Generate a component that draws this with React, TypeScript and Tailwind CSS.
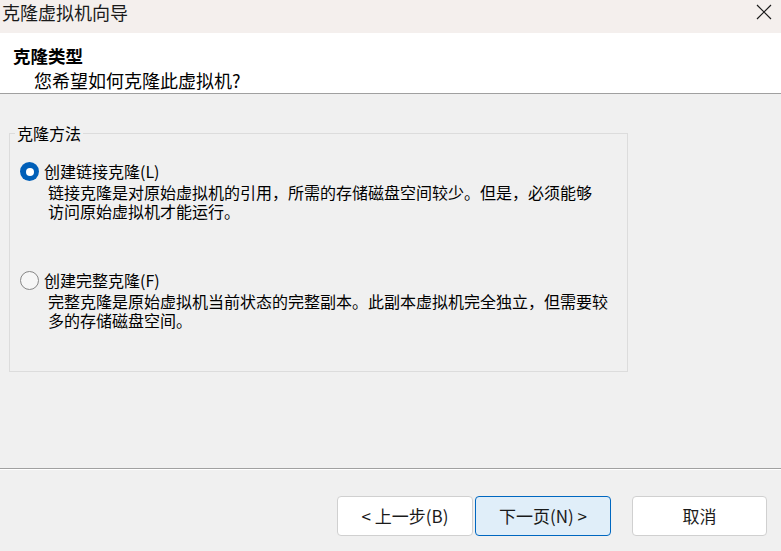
import React from 'react';

const Radio: React.FC<{ checked?: boolean }> = ({ checked }) =>
  checked ? (
    <span className="flex h-[19px] w-[19px] shrink-0 items-center justify-center rounded-full bg-[#005fb8]">
      <span className="h-[8px] w-[8px] rounded-full bg-white" />
    </span>
  ) : (
    <span className="h-[19px] w-[19px] shrink-0 rounded-full border-[1.5px] border-[#868686] bg-[#f6f6f6]" />
  );

const App: React.FC = () => {
  return (
    <div className="flex h-[551px] w-[781px] flex-col overflow-hidden bg-[#f0f0f0] font-['Noto_Sans_CJK_SC','Noto_Sans',sans-serif] text-black">
      {/* Title bar */}
      <div className="flex h-[33px] shrink-0 items-start justify-between bg-[#f4efed]">
        <span className="pl-[2px] pt-[1px] text-[18px] leading-[22px] text-[#1a1a1a]">克隆虚拟机向导</span>
        <svg className="mr-[9px] mt-[4px]" width="16" height="16" viewBox="0 0 16 16">
          <path d="M1 1 L15 15 M15 1 L1 15" stroke="#1a1a1a" strokeWidth="1.2" fill="none" />
        </svg>
      </div>

      {/* Header */}
      <div className="h-[60px] shrink-0 bg-white pl-[13px] pt-[12px]">
        <div className="text-[17.5px] font-bold leading-[22px]">克隆类型</div>
        <div className="mt-[2px] pl-[21px] text-[18px] leading-[22px]">您希望如何克隆此虚拟机?</div>
      </div>
      <div className="h-px shrink-0 bg-[#a0a0a0]" />

      {/* Body */}
      <div className="h-[374px] shrink-0 px-[9px] pt-[30px]">
        <fieldset className="h-[248px] w-[619px] border border-[#dcdcdc] px-[10px] pt-[19px] text-[16px] leading-[19px]">
          <legend className="ml-[-5px] px-[2px]">克隆方法</legend>

          <div className="flex items-start gap-[5px]">
            <Radio checked />
            <span>创建链接克隆(L)</span>
          </div>
          <p className="mt-[2px] pl-[28px]">
            链接克隆是对原始虚拟机的引用，所需的存储磁盘空间较少。但是，必须能够
            <br />
            访问原始虚拟机才能运行。
          </p>

          <div className="mt-[50px] flex items-start gap-[5px]">
            <Radio />
            <span>创建完整克隆(F)</span>
          </div>
          <p className="mt-[2px] pl-[28px]">
            完整克隆是原始虚拟机当前状态的完整副本。此副本虚拟机完全独立，但需要较
            <br />
            多的存储磁盘空间。
          </p>
        </fieldset>
      </div>

      {/* Footer */}
      <div className="h-px shrink-0 bg-[#a0a0a0]" />
      <div className="h-px shrink-0 bg-white" />
      <div className="flex flex-1 items-start justify-end pr-[14px] pt-[26px] text-[17px]">
        <button className="h-[40px] w-[136px] rounded-[4px] border border-[#d0d0d0] bg-white text-[#1a1a1a]">
          &lt; 上一步(B)
        </button>
        <button className="ml-[2px] h-[40px] w-[136px] rounded-[4px] border border-[#0067c0] bg-[#e0eef9] text-[#1a1a1a]">
          下一页(N) &gt;
        </button>
        <button className="ml-[21px] h-[40px] w-[135px] rounded-[4px] border border-[#d0d0d0] bg-white text-[#1a1a1a]">
          取消
        </button>
      </div>
    </div>
  );
};

export default App;
